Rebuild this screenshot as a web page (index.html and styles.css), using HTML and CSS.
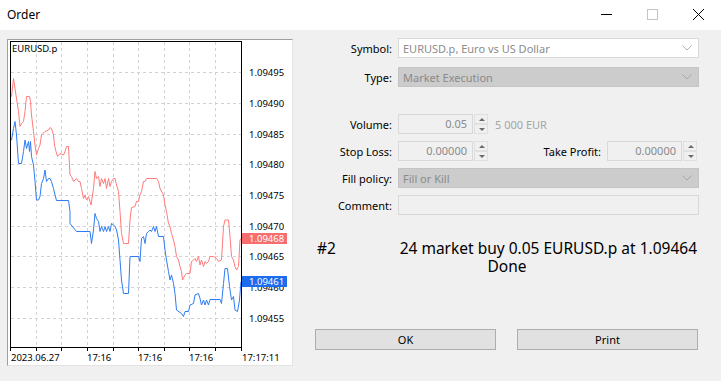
FILE: index.html
```html
<!DOCTYPE html>
<html lang="en">
<head>
    <meta charset="UTF-8">
    <title>Order</title>
    <link rel="stylesheet" href="styles.css">
</head>
<body>

<div class="window">
    <div class="titlebar">
        <span class="title">Order</span>
        <div class="controls">
            <div class="ctl"><svg width="12" height="12" viewBox="0 0 12 12"><line x1="1" y1="6.5" x2="12" y2="6.5" stroke="#000" stroke-width="1"/></svg></div>
            <div class="ctl"><svg width="12" height="12" viewBox="0 0 12 12"><rect x="1.5" y="1.5" width="10" height="10" fill="none" stroke="#c4c4c4" stroke-width="1"/></svg></div>
            <div class="ctl"><svg width="12" height="12" viewBox="0 0 12 12"><path d="M1 1 L12 12 M12 1 L1 12" stroke="#000" stroke-width="1"/></svg></div>
        </div>
    </div>

    <div class="main">
        <div class="chart">
            <svg width="284" height="325" viewBox="8 40 284 325">
                <g class="grid">
                    <line x1="11" y1="72.5" x2="241" y2="72.5"/>
                    <line x1="11" y1="103.5" x2="241" y2="103.5"/>
                    <line x1="11" y1="134.5" x2="241" y2="134.5"/>
                    <line x1="11" y1="164.5" x2="241" y2="164.5"/>
                    <line x1="11" y1="195.5" x2="241" y2="195.5"/>
                    <line x1="11" y1="226.5" x2="241" y2="226.5"/>
                    <line x1="11" y1="256.5" x2="241" y2="256.5"/>
                    <line x1="11" y1="287.5" x2="241" y2="287.5"/>
                    <line x1="11" y1="318.5" x2="241" y2="318.5"/>
                    <line x1="36.5" y1="42" x2="36.5" y2="347"/>
                    <line x1="61.5" y1="42" x2="61.5" y2="347"/>
                    <line x1="87.5" y1="42" x2="87.5" y2="347"/>
                    <line x1="113.5" y1="42" x2="113.5" y2="347"/>
                    <line x1="138.5" y1="42" x2="138.5" y2="347"/>
                    <line x1="164.5" y1="42" x2="164.5" y2="347"/>
                    <line x1="189.5" y1="42" x2="189.5" y2="347"/>
                    <line x1="215.5" y1="42" x2="215.5" y2="347"/>
                </g>

                <polyline class="ask" points="10,96.5 11.5,96.5 13.5,78.5 15,88.5 18.5,111.5 20,126.5 21.5,123.5 23.5,121.5 25,111.5 26.5,96.5 29.5,96.5 30.5,101.5 31.5,115 33.5,131.5 35,145 36.5,155 38.5,148.5 40,145 41.5,135 45,131.5 48.5,130 50,127.5 51.5,128.5 53.5,135 54.5,145 56,151.5 57.5,156.5 60,153.5 63.5,155 65,151.5 66.5,146.5 68.5,146.5 70,175 71.5,176.5 73.5,181.5 76.5,178.5 78.5,181.5 80,181.5 81.5,188.5 83.5,198.5 85,195 86.5,200 88.5,196.5 90,201.5 91,205 93.5,188.5 95,171.5 96.5,178.5 98.5,176.5 100,186.5 101.5,178.5 103.5,183.5 105,178.5 106.5,188.5 108.5,178.5 110,186.5 111.5,181.5 113.5,178.5 115,178.5 116.5,185 118.5,191.5 120,211.5 121.5,233.5 123.5,243.5 128.5,243.5 130,220 131.5,207.5 135,206.5 136.5,201.5 138.5,201.5 140,195 141.5,191.5 143.5,181.5 145,181.5 146.5,178.5 156.5,178.5 158.5,181.5 160,188.5 163.5,195 165,205 166.5,211.5 168.5,223.5 170,226.5 171.5,233.5 173.5,240 175,246.5 176.5,256.5 178.5,260 180,266.5 181.5,271.5 182.5,280 185,275 186.5,273.5 190,273.5 191.5,261.5 193.5,260 195,258.5 196.5,261.5 198.5,256.5 200,265 201.5,260 203.5,266.5 205,261.5 206.5,263.5 208.5,261.5 210,256.5 213.5,256.5 216.5,258.5 218.5,261.5 221.5,260 223.5,226.5 225,220 228.5,220 230,236.5 231.5,256.5 233.5,260 235,266.5 236.5,270 238.5,266.5 240,240 241,238.5"/>

                <polyline class="bid" points="10,140 11.5,140 13.5,128.5 15,121.5 16.5,135 18.5,163.5 21.5,163.5 23.5,151.5 25,140 26.5,148.5 28.5,141.5 29.5,151.5 30.5,141.5 31.5,156.5 33.5,165 35,181.5 36.5,200 38.5,200 40,196.5 41.5,183.5 43.5,178.5 45,170 46.5,181.5 48.5,178.5 50,178.5 51.5,181.5 53.5,188.5 55,195 56.5,200.5 68.5,200.5 70,211.5 70,223.5 76.5,231.5 90,231.5 91.5,243.5 93.5,230 95,213.5 96.5,218.5 98.5,221.5 100,231.5 101.5,226.5 103.5,231.5 105,226.5 106.5,231.5 108.5,226.5 110,231.5 111.5,223.5 113.5,225 115,226.5 116.5,230 118.5,240 120,260 121.5,280 123.5,293.5 128.5,293.5 130,256.5 138.5,256.5 140,261.5 141.5,238.5 143.5,236.5 145,243.5 146.5,233.5 148.5,231.5 150,230 151.5,231.5 153.5,226.5 155,231.5 156.5,226.5 158.5,236.5 163.5,236.5 165,250 166.5,260 168.5,271.5 170,280 171.5,275 173.5,283.5 175,293.5 176.5,310 181.5,313.5 183.5,316.5 185,311.5 188.5,311.5 190,305 193.5,303.5 195,295 198.5,293.5 200,298.5 201.5,305 203.5,300 205,305 206.5,300 208.5,305 210,299.5 220,299.5 221.5,303.5 223.5,283.5 225,268.5 227.5,268.5 229.5,286.5 231.5,300 233.5,296.5 235,310 237.5,311.5 239.5,300 241,281.5"/>

                <rect class="frame" x="10.5" y="41.5" width="231" height="306"/>

                <g class="ticks">
                    <line x1="10.5" y1="348" x2="10.5" y2="351"/>
                    <line x1="36.5" y1="348" x2="36.5" y2="351"/>
                    <line x1="61.5" y1="348" x2="61.5" y2="351"/>
                    <line x1="87.5" y1="348" x2="87.5" y2="351"/>
                    <line x1="113.5" y1="348" x2="113.5" y2="351"/>
                    <line x1="138.5" y1="348" x2="138.5" y2="351"/>
                    <line x1="164.5" y1="348" x2="164.5" y2="351"/>
                    <line x1="189.5" y1="348" x2="189.5" y2="351"/>
                    <line x1="215.5" y1="348" x2="215.5" y2="351"/>
                    <line x1="241.5" y1="348" x2="241.5" y2="351"/>
                </g>

                <text class="sym" x="12" y="52">EURUSD.p</text>

                <g class="axis">
                    <text x="249" y="75.5">1.09495</text>
                    <text x="249" y="106.5">1.09490</text>
                    <text x="249" y="137.5">1.09485</text>
                    <text x="249" y="167.5">1.09480</text>
                    <text x="249" y="198.5">1.09475</text>
                    <text x="249" y="229.5">1.09470</text>
                    <text x="249" y="259.5">1.09465</text>
                    <text x="249" y="290.5">1.09460</text>
                    <text x="249" y="321.5">1.09455</text>

                    <text x="11" y="361">2023.06.27</text>
                    <text x="87" y="361">17:16</text>
                    <text x="138" y="361">17:16</text>
                    <text x="189" y="361">17:16</text>
                    <text x="242" y="361">17:17:11</text>
                </g>

                <rect x="242" y="233" width="45" height="11" fill="#f86d6d"/>
                <text class="tag" x="249" y="241.5">1.09468</text>
                <rect x="242" y="276" width="45" height="11" fill="#1c6cf0"/>
                <text class="tag" x="249" y="284.5">1.09461</text>
            </svg>
        </div>

        <div class="panel">
            <div class="row row-symbol">
                <label>Symbol:</label>
                <div class="combo combo-light">
                    <span>EURUSD.p, Euro vs US Dollar</span>
                    <svg width="10" height="6" viewBox="0 0 10 6"><path d="M0.5 0.5 L5 5 L9.5 0.5" fill="none" stroke="#b0b0b0"/></svg>
                </div>
            </div>

            <div class="row row-type">
                <label>Type:</label>
                <div class="combo combo-off">
                    <span>Market Execution</span>
                    <svg width="10" height="6" viewBox="0 0 10 6"><path d="M0.5 0.5 L5 5 L9.5 0.5" fill="none" stroke="#a8a8a8"/></svg>
                </div>
            </div>

            <div class="row">
                <label>Volume:</label>
                <div class="num">0.05</div>
                <div class="spin"><div class="up"></div><div class="down"></div></div>
                <span class="hint">5 000 EUR</span>
            </div>

            <div class="row">
                <label>Stop Loss:</label>
                <div class="num">0.00000</div>
                <div class="spin"><div class="up"></div><div class="down"></div></div>
                <label class="tp-label">Take Profit:</label>
                <div class="num">0.00000</div>
                <div class="spin spin-end"><div class="up"></div><div class="down"></div></div>
            </div>

            <div class="row">
                <label>Fill policy:</label>
                <div class="combo combo-off">
                    <span>Fill or Kill</span>
                    <svg width="10" height="6" viewBox="0 0 10 6"><path d="M0.5 0.5 L5 5 L9.5 0.5" fill="none" stroke="#a8a8a8"/></svg>
                </div>
            </div>

            <div class="row">
                <label>Comment:</label>
                <div class="field"></div>
            </div>

            <div class="result">
                <div class="result-line">
                    <span>#2</span>
                    <span>24 market buy 0.05 EURUSD.p at 1.09464</span>
                </div>
                <div class="done">Done</div>
            </div>

            <div class="buttons">
                <button>OK</button>
                <button>Print</button>
            </div>
        </div>
    </div>
</div>

</body>
</html>
```

FILE: styles.css
```css
body {
    margin: 0;
    background: #f0f0f0;
    font-family: "Noto Sans", Arial, sans-serif;
    font-size: 11px;
    color: #000;
}

.window {
    width: 721px;
    height: 381px;
    overflow: hidden;
}

.titlebar {
    height: 30px;
    background: #fff;
    display: flex;
    align-items: center;
    justify-content: space-between;
}

.title {
    padding-left: 7px;
    font-size: 12px;
    margin-top: -2px;
}

.controls {
    display: flex;
    height: 30px;
}

.ctl {
    width: 46px;
    display: flex;
    align-items: center;
    justify-content: center;
    margin-top: -3px;
}

.main {
    display: flex;
    padding: 8px 0 0 7px;
}

.chart {
    margin-top: 1px;
    width: 284px;
    height: 325px;
    flex-shrink: 0;
    background: #fff;
    border: 1px solid;
    border-color: #a0a0a0 #e3e3e3 #e3e3e3 #a0a0a0;
}

.chart svg {
    display: block;
    font-family: "Noto Sans", Arial, sans-serif;
    font-size: 9.5px;
}

.grid line {
    stroke: #d2d2d2;
    stroke-width: 1;
    stroke-dasharray: 3 3;
}

.ask {
    fill: none;
    stroke: #ff7b7b;
    stroke-width: 1;
}

.bid {
    fill: none;
    stroke: #2f7cf2;
    stroke-width: 1;
}

.frame {
    fill: none;
    stroke: #000;
    stroke-width: 1;
}

.ticks line {
    stroke: #000;
    stroke-width: 1;
}

.axis text,
.sym {
    fill: #000;
}

.tag {
    fill: #fff;
}

.panel {
    margin-left: 7px;
    width: 399px;
}

.row {
    display: flex;
    align-items: center;
    height: 20px;
    margin-bottom: 7px;
}

.row-symbol {
    margin-bottom: 9px;
}

.row-type {
    margin-bottom: 27px;
}

.row label {
    width: 98px;
    text-align: right;
    padding-right: 6px;
    box-sizing: border-box;
    flex-shrink: 0;
}

.combo {
    flex: 1;
    height: 20px;
    box-sizing: border-box;
    display: flex;
    align-items: center;
    justify-content: space-between;
    padding: 0 6px 0 4px;
    border: 1px solid #d9d9d9;
}

.combo-light {
    background: #fff;
    color: #8c8c8c;
}

.combo-off {
    background: #cccccc;
    border-color: #c4c4c4;
    color: #8a8a8a;
}

.num {
    width: 75px;
    height: 20px;
    box-sizing: border-box;
    border: 1px solid #d9d9d9;
    background: #f0f0f0;
    color: #8a8a8a;
    text-align: right;
    padding-right: 5px;
    line-height: 18px;
}

.spin {
    width: 14px;
    height: 20px;
    margin-left: 1px;
    display: flex;
    flex-direction: column;
    justify-content: space-between;
}

.spin-end {
    margin-right: 2px;
}

.spin .up,
.spin .down {
    height: 9px;
    border: 1px solid #e0e0e0;
    background: #f0f0f0;
    position: relative;
}

.spin .up::after,
.spin .down::after {
    content: "";
    position: absolute;
    left: 4px;
    top: 3px;
    border-left: 3px solid transparent;
    border-right: 3px solid transparent;
}

.spin .up::after {
    border-bottom: 3px solid #6a6a6a;
}

.spin .down::after {
    border-top: 3px solid #6a6a6a;
}

.hint {
    margin-left: 7px;
    color: #a4a4a4;
}

.row .tp-label {
    width: auto;
    margin-left: auto;
}

.field {
    flex: 1;
    height: 20px;
    box-sizing: border-box;
    border: 1px solid #d9d9d9;
    background: #f0f0f0;
}

.result {
    margin: 24px 2px 0 17px;
    font-size: 15.5px;
    line-height: 18px;
}

.result-line {
    display: flex;
    justify-content: space-between;
}

.done {
    text-align: center;
}

.buttons {
    display: flex;
    gap: 21px;
    margin: 54px 0 0 15px;
}

.buttons button {
    width: 181px;
    height: 21px;
    background: #e1e1e1;
    border: 1px solid #adadad;
    font-family: "Noto Sans", Arial, sans-serif;
    font-size: 11px;
    color: #000;
    padding: 0;
}
```
